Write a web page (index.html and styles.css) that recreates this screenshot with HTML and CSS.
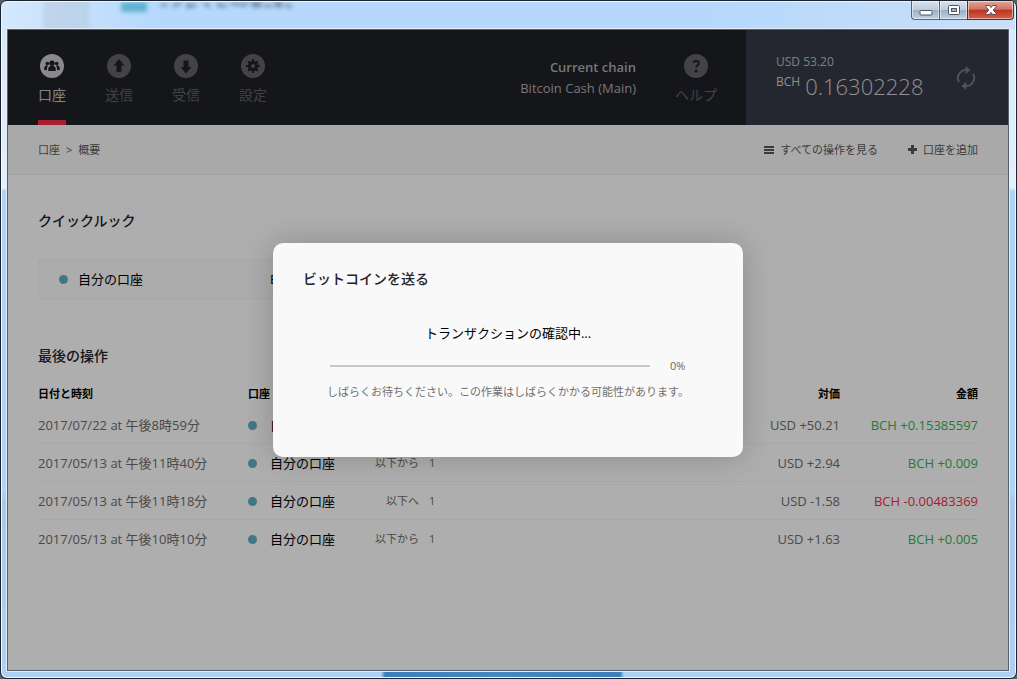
FILE: index.html
```html
<!DOCTYPE html>
<html lang="ja">
<head>
<meta charset="utf-8">
<meta name="viewport" content="width=device-width, initial-scale=1">
<title>口座</title>
<link rel="stylesheet" href="styles.css">
</head>
<body>
<div class="window">
  <div class="titlebar">
    <svg class="backdrop" viewBox="0 0 310 27" width="310" height="27" aria-hidden="true">
      <defs><filter id="soft" x="-20%" y="-80%" width="140%" height="260%"><feGaussianBlur stdDeviation="2"/></filter></defs>
      <rect x="42" y="-4" width="46" height="40" fill="#9aa4b0" opacity=".22" filter="url(#soft)"/>
      <g filter="url(#soft)">
        <rect x="120" y="0" width="26" height="10" rx="2" fill="#5fb4d2"/>
        <path d="M160 3h6M172 4l8-3M188 0l-1 5 8-2M203 1l6 4M218 0v4h8M230 2h10M240 4l7-3M250 1h9v3h-8M263 4h8M275 1h5v3h-5zM284 3l7 2" fill="none" stroke="#7d8da4" stroke-width="3"/>
      </g>
    </svg>
    <div class="captions">
      <button class="cap cap-min" aria-label="最小化"><svg width="14" height="8" viewBox="0 0 14 8"><rect x="1" y="2.500" width="12" height="4.500" rx="1" fill="#fff" stroke="#4c5568"/></svg></button>
      <button class="cap cap-max" aria-label="最大化"><svg width="12" height="10" viewBox="0 0 12 10"><rect x=".5" y=".5" width="11" height="9" rx="1" fill="#fff" stroke="#4c5568"/><rect x="3.500" y="3.500" width="5" height="3" fill="#9fb4d0" stroke="#4c5568"/></svg></button>
      <button class="cap cap-close" aria-label="閉じる"><svg width="12" height="10" viewBox="0 0 12 10"><path d="M.8.5h3.400L6 2.600 7.800.5h3.400v1L8.300 5l2.900 3.500v1H7.800L6 7.400 4.200 9.500H.8v-1L3.700 5 .8 1.500z" fill="#fff" stroke="#59394a" stroke-width=".9"/></svg></button>
    </div>
  </div>

  <div class="client">
    <header class="header">
      <nav class="nav">
        <a class="nav-item active" href="#accounts">
          <svg class="nav-icon" viewBox="0 0 24 24"><circle cx="12" cy="12" r="12"/><g class="cut"><circle cx="12" cy="9.300" r="2.700"/><path d="M8.300 17c-.5-3 .5-4.700 2.200-4.900h3c1.700.2 2.700 1.900 2.200 4.900z"/><circle cx="7.300" cy="9.600" r="1.800"/><circle cx="16.700" cy="9.600" r="1.800"/><path d="M4.200 16c-.2-2.900.5-4.200 2-4.400h2c-1 1-1.300 2.600-1.200 4.400zM19.800 16c.2-2.900-.5-4.200-2-4.400h-2c1 1 1.300 2.600 1.200 4.400z"/></g></svg>
          <span>口座</span>
        </a>
        <a class="nav-item" href="#send">
          <svg class="nav-icon" viewBox="0 0 24 24"><circle cx="12" cy="12" r="12"/><path class="cut" d="M12 5l5.500 6.500h-3V18h-5v-6.500h-3z"/></svg>
          <span>送信</span>
        </a>
        <a class="nav-item" href="#receive">
          <svg class="nav-icon" viewBox="0 0 24 24"><circle cx="12" cy="12" r="12"/><path class="cut" d="M12 19.500l5.500-6.500h-3V6.500h-5V13h-3z"/></svg>
          <span>受信</span>
        </a>
        <a class="nav-item" href="#settings">
          <svg class="nav-icon" viewBox="0 0 24 24"><circle cx="12" cy="12" r="12"/><circle class="cut" cx="12" cy="12" r="5.200"/><path class="teeth" d="M12 5v14M5 12h14M7.200 7.200l9.600 9.600M16.800 7.200l-9.600 9.600"/><circle cx="12" cy="12" r="2"/></svg>
          <span>設定</span>
        </a>
      </nav>
      <div class="chain"><strong>Current chain</strong><span>Bitcoin Cash (Main)</span></div>
      <a class="nav-item help" href="#help">
        <svg class="nav-icon" viewBox="0 0 24 24"><circle cx="12" cy="12" r="12"/><path class="question" d="M9.200 8.800c.4-1.200 1.500-1.700 2.900-1.700 1.700 0 2.700.9 2.700 2.200 0 2-2.700 2-2.700 4.300"/><circle class="cut" cx="12" cy="17" r="1.500"/></svg>
        <span>ヘルプ</span>
      </a>
      <section class="balance">
        <div class="amounts">
          <div class="fiat">USD 53.20</div>
          <div class="coin"><span class="unit">BCH</span><span class="value">0.16302228</span></div>
        </div>
        <button class="refresh" aria-label="更新"><svg viewBox="0 0 20 24" width="20" height="24"><g fill="none" stroke="#70747f" stroke-width="2"><path d="M3 16.200A8.200 8.200 0 0 1 10 3.900"/><path d="M17 7.800A8.200 8.200 0 0 1 10 20.100"/></g><path fill="#70747f" d="M9.600 0l5 4.100-5 4.100zM10.400 24l-5-4.100 5-4.100z"/></svg></button>
      </section>
    </header>

    <div class="subbar">
      <div class="crumbs"><a href="#accounts">口座</a><span>&gt;</span><span>概要</span></div>
      <div class="actions">
        <a href="#operations"><svg width="10" height="8" viewBox="0 0 10 8"><path d="M0 1h10M0 4h10M0 7h10" stroke="#555" stroke-width="2" shape-rendering="crispEdges"/></svg>すべての操作を見る</a>
        <a href="#add"><svg width="9" height="9" viewBox="0 0 9 9"><path d="M4.500 0v9M0 4.500h9" stroke="#555" stroke-width="3"/></svg>口座を追加</a>
      </div>
    </div>

    <main class="main">
      <h2>クイックルック</h2>
      <div class="account"><i class="dot"></i><span>自分の口座</span><span class="account-unit">BCH</span></div>
      <h2>最後の操作</h2>
      <table class="ops">
        <thead><tr><th class="c-date">日付と時刻</th><th class="c-name">口座</th><th class="c-dir"></th><th class="c-to"></th><th class="c-fiat num">対価</th><th class="c-coin num">金額</th></tr></thead>
        <tbody>
          <tr><td>2017/07/22 at 午後8時59分</td><td class="name"><i class="dot"></i>自分の口座</td><td></td><td></td><td class="num">USD +50.21</td><td class="num plus">BCH +0.15385597</td></tr>
          <tr><td>2017/05/13 at 午後11時40分</td><td class="name"><i class="dot"></i>自分の口座</td><td class="dir">以下から</td><td class="to">1</td><td class="num">USD +2.94</td><td class="num plus">BCH +0.009</td></tr>
          <tr><td>2017/05/13 at 午後11時18分</td><td class="name"><i class="dot"></i>自分の口座</td><td class="dir">以下へ</td><td class="to">1</td><td class="num">USD -1.58</td><td class="num minus">BCH -0.00483369</td></tr>
          <tr><td>2017/05/13 at 午後10時10分</td><td class="name"><i class="dot"></i>自分の口座</td><td class="dir">以下から</td><td class="to">1</td><td class="num">USD +1.63</td><td class="num plus">BCH +0.005</td></tr>
        </tbody>
      </table>
    </main>

    <div class="overlay">
      <section class="dialog" role="dialog" aria-modal="true" aria-labelledby="dialog-title">
        <h1 id="dialog-title">ビットコインを送る</h1>
        <label class="status" for="send-progress">トランザクションの確認中...</label>
        <div class="progress-row"><progress id="send-progress" value="0" max="100"></progress><span>0%</span></div>
        <p>しばらくお待ちください。この作業はしばらくかかる可能性があります。</p>
      </section>
    </div>
  </div>
</div>
</body>
</html>
```
FILE: styles.css
```css
* { box-sizing: border-box; }
body {
  margin: 0;
  background: #56606a;
  font-family: "Open Sans", "Noto Sans CJK JP", sans-serif;
  font-size: 13px;
  line-height: 20px;
  color: #000;
}
a { color: inherit; text-decoration: none; }
button { padding: 0; border: 0; background: none; }
h1, h2, p { margin: 0; }

.window {
  display: flex;
  flex-direction: column;
  height: 100vh;
  padding: 0 7px 7px 6px;
  border: 1px solid #1a222e;
  border-radius: 7px;
  overflow: hidden;
  box-shadow: inset 0 0 0 1px #f0f8ff;
  background:
    linear-gradient(90deg, transparent 380px, #3a7fbc 384px, #4488c2 500px, #3a7fbc 619px, transparent 623px) bottom / 100% 7px no-repeat,
    linear-gradient(90deg, #d5e8fd, #b5d8fc 160px, #b5d8fc 70%, #c9dff7) top / 100% 28px no-repeat,
    linear-gradient(#d4e6fa, #e6effa 187px, #b0d3f8 190px, #b0d3f8 490px, #a9c9ec 500px, #afd0f3);
}
.titlebar { position: relative; flex: none; display: flex; justify-content: flex-end; height: 28px; }
.backdrop { position: absolute; left: -6px; top: 1px; }
.captions { display: flex; align-items: flex-start; margin-right: -5px; }
.cap {
  display: flex;
  align-items: center;
  justify-content: center;
  width: 28px;
  height: 19px;
  border: 1px solid #596372;
  border-top: 0;
  border-right: 0;
  box-shadow: inset 0 0 0 1px rgba(255, 255, 255, .5);
  background: linear-gradient(#dbe3ed, #bccbdc 48%, #9aafc5 50%, #bed0e4);
}
.cap-min { border-radius: 0 0 0 4px; padding-top: 4px; }
.cap-close {
  width: 47px;
  border-right: 1px solid #5a2a30;
  border-color: #5a2a30;
  border-radius: 0 0 4px 0;
  background: linear-gradient(#e3a596, #cf7464 46%, #bb3420 50%, #d5604a);
}

.client {
  position: relative;
  flex: 1;
  display: flex;
  flex-direction: column;
  min-height: 0;
  border: 1px solid #56616f;
  box-shadow: 0 0 0 1px #e2eefb;
  background: #f9f9f9;
}
.header { display: flex; height: 95px; background: #1e2026; color: #ababab; }
.nav { display: flex; gap: 39px; padding-left: 30px; }
.nav-item {
  display: flex;
  flex-direction: column;
  align-items: center;
  gap: 7px;
  min-width: 28px;
  padding-top: 24px;
  border-bottom: 5px solid transparent;
  font-size: 14px;
  color: #5e5f64;
  fill: #606166;
}
.nav-icon { width: 24px; height: 24px; }
.nav-item.active { border-color: #ee2c45; color: #bfbfbf; fill: #c6c6c6; }
.cut { fill: #1e2026; }
.teeth { stroke: #1e2026; stroke-width: 2; }
.question { fill: none; stroke: #1e2026; stroke-width: 2; }
.chain { display: flex; flex-direction: column; align-items: flex-end; margin-left: auto; padding-top: 27px; line-height: 21px; }
.chain strong { font-weight: 600; }
.help { margin: 0 29px 0 39px; }
.balance {
  display: flex;
  align-items: center;
  justify-content: space-between;
  width: 262px;
  padding: 0 32px 0 30px;
  background: #343844;
  color: #cfcfcf;
}
.fiat { padding-top: 1px; font-size: 12px; color: #b8b8b8; line-height: 16px; }
.coin { display: flex; gap: 5px; line-height: 32px; }
.unit { font-size: 12px; line-height: 24px; }
.value { font-size: 22px; font-weight: 300; }
.refresh { display: flex; }

.subbar {
  display: flex;
  align-items: center;
  justify-content: space-between;
  height: 50px;
  padding: 0 30px;
  border-bottom: 1px solid #e8e8e8;
  background: #f3f3f3;
  font-size: 11px;
  color: #555;
}
.crumbs { display: flex; gap: 6px; }
.actions { display: flex; gap: 30px; }
.actions a { display: flex; align-items: center; gap: 6px; }

.main { padding: 36px 30px; }
h1, h2 { font-size: 14px; font-weight: 500; line-height: 20px; color: #1f222c; }
h2 { font-weight: 500; }
.account {
  display: flex;
  align-items: center;
  width: 49%;
  height: 40px;
  margin: 28px 0 47px;
  padding-left: 20px;
  border: 1px solid #f0f0f0;
  border-radius: 4px;
  background: #f7f7f7;
}
.dot { display: inline-block; flex: none; width: 9px; height: 9px; border-radius: 50%; background: #5baac3; }
.account .dot { margin-right: 10px; }
.account-unit { margin-left: 127px; }
.ops { width: 100%; margin-top: 18px; border-collapse: collapse; table-layout: fixed; }
.ops th { height: 20px; padding: 0 0 1px; font-size: 11px; text-align: left; }
.ops td { height: 38px; padding: 0; border-bottom: 1px solid #efefef; color: #6a6a6a; white-space: nowrap; }
.ops tr:last-child td { border-bottom: 0; }
.ops thead { border-bottom: 1px solid transparent; }
.ops .num { text-align: right; }
.c-date { width: 210px; }
.c-name { width: 110px; }
.c-dir { width: 61px; }
.c-fiat { width: 120px; }
.c-coin { width: 138px; }
.ops .name { color: #000; }
.name .dot { margin-right: 13px; }
.ops .dir { font-size: 11px; text-align: right; }
.ops .to { padding-left: 10px; font-size: 11px; }
.ops .plus { color: #36b04c; }
.ops .minus { color: #ee2c45; }

.overlay {
  position: absolute;
  inset: 0;
  display: flex;
  align-items: center;
  justify-content: center;
  background: rgba(0, 0, 0, .3);
}
.dialog {
  width: 470px;
  padding: 26px 30px 55px;
  border-radius: 10px;
  background: #f9f9f9;
  box-shadow: 0 0 30px rgba(0, 0, 0, .2);
}
.status { display: block; margin: 34px 0 13px; text-align: center; }
.progress-row { display: flex; align-items: center; gap: 20px; padding: 0 27px; font-size: 11px; color: #666; }
progress { appearance: none; width: 320px; height: 2px; border: 0; background: #c8c8c8; }
progress::-webkit-progress-bar { background: #c8c8c8; }
progress::-webkit-progress-value { background: #5baac3; }
.dialog p { margin-top: 6px; padding-left: 24px; font-size: 11px; color: #707070; white-space: nowrap; }
```
